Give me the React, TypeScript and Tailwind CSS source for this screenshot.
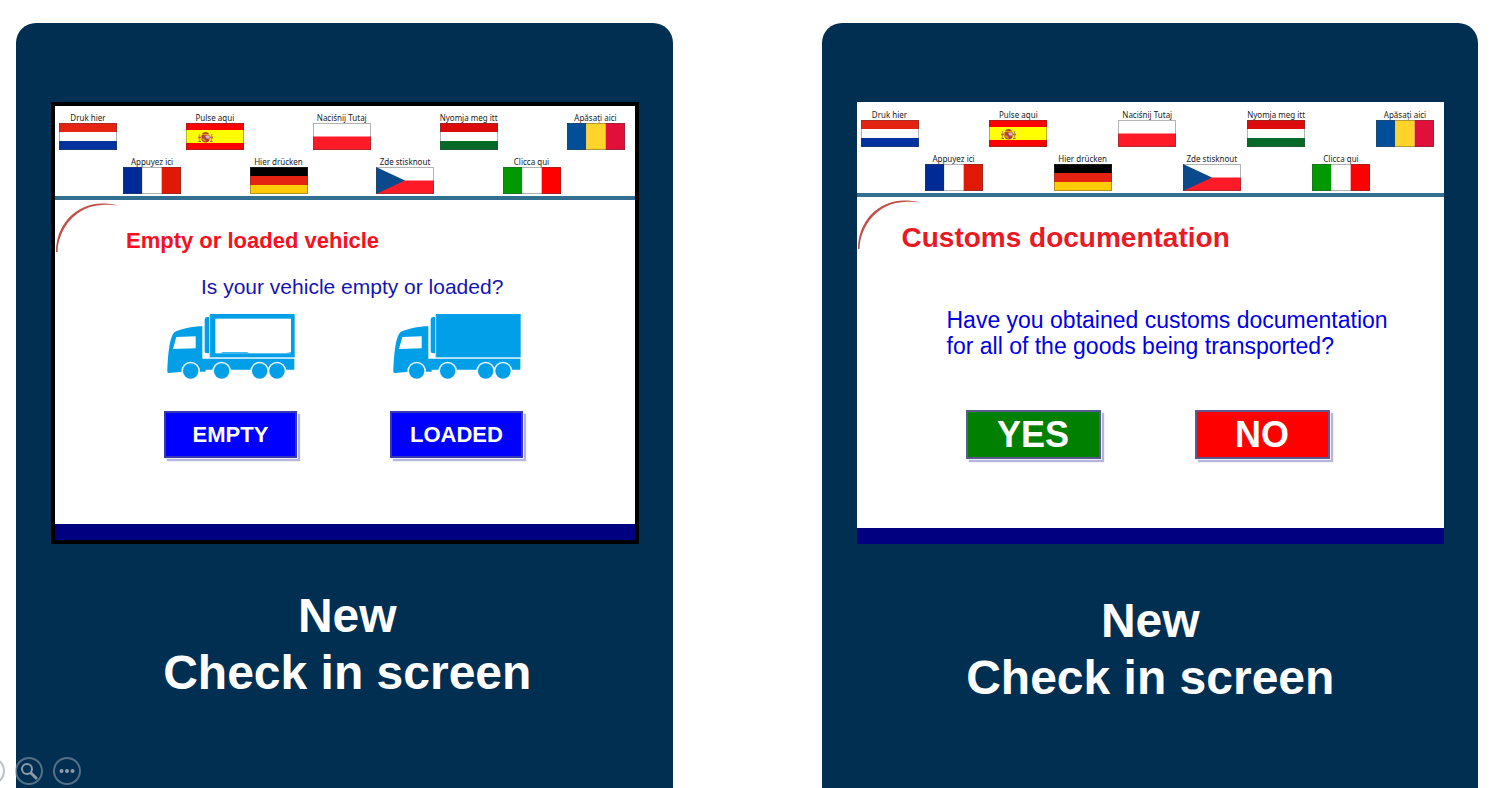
import type { ReactNode } from 'react';

type Country = 'nl' | 'es' | 'pl' | 'hu' | 'ro' | 'fr' | 'de' | 'cz' | 'it';

interface Language {
  country: Country;
  label: string;
}

const TOP_LANGUAGES: Language[] = [
  { country: 'nl', label: 'Druk hier' },
  { country: 'es', label: 'Pulse aqui' },
  { country: 'pl', label: 'Naciśnij Tutaj' },
  { country: 'hu', label: 'Nyomja meg itt' },
  { country: 'ro', label: 'Apăsați aici' },
];

const BOTTOM_LANGUAGES: Language[] = [
  { country: 'fr', label: 'Appuyez ici' },
  { country: 'de', label: 'Hier drücken' },
  { country: 'cz', label: 'Zde stisknout' },
  { country: 'it', label: 'Clicca qui' },
];

const HORIZONTAL: Partial<Record<Country, string[]>> = {
  nl: ['#e42313', '#ffffff', '#0032a0'],
  hu: ['#dc0c0c', '#ffffff', '#056a28'],
  de: ['#000000', '#e42313', '#ffcb05'],
  pl: ['#ffffff', '#ff1a28'],
};

const VERTICAL: Partial<Record<Country, string[]>> = {
  ro: ['#004f98', '#ffd42a', '#e0103a'],
  fr: ['#002a96', '#ffffff', '#e01808'],
  it: ['#009a00', '#ffffff', '#ff0000'],
};

function Flag({ country }: { country: Country }): ReactNode {
  const rows = HORIZONTAL[country];
  const columns = VERTICAL[country];

  return (
    <svg viewBox="0 0 58 27" className="block h-[27px] w-[58px]" aria-hidden="true">
      {rows?.map((color, i) => (
        <rect
          key={i}
          y={(27 / rows.length) * i}
          width="58"
          height={27 / rows.length}
          fill={color}
        />
      ))}
      {columns?.map((color, i) => (
        <rect
          key={i}
          x={(58 / columns.length) * i}
          width={58 / columns.length}
          height="27"
          fill={color}
        />
      ))}
      {country === 'es' && (
        <>
          <rect width="58" height="27" fill="#ff0000" />
          <rect y="7" width="58" height="13" fill="#ffff00" />
          <path d="M13.500 11v8M25.500 11v8" stroke="#c8a060" strokeWidth="1.500" />
          <path d="M12 14.500h3M24 14.500h3" stroke="#c86040" strokeWidth="1.500" />
          <path d="M12.500 18.500h2.500M24 18.500h2.500" stroke="#907060" />
          <path d="M15.500 12h8v4.500c0 4-8 4-8 0z" fill="#b8403c" />
          <path d="M16 11.500c0-3.500 7-3.500 7 0z" fill="#c04a20" />
          <path d="M19.500 12.500h3.500v3h-3.500z" fill="#e2b6c4" />
          <path d="M16 15.500h3.500v3c-2 0-3.500-1-3.500-3z" fill="#d88a28" />
          <circle cx="19.500" cy="15.500" r="1" fill="#6a4a80" />
        </>
      )}
      {country === 'cz' && (
        <>
          <rect width="58" height="13.500" fill="#ffffff" />
          <rect y="13.500" width="58" height="13.500" fill="#ff1a28" />
          <path d="M0 0l29 13.500L0 27z" fill="#0a4a8c" />
        </>
      )}
      <rect x="0.5" y="0.5" width="57" height="26" fill="none" stroke="#404040" strokeOpacity="0.4" />
    </svg>
  );
}

function LanguageButton({ country, label }: Language): ReactNode {
  return (
    <button type="button" className="flex w-[58px] flex-col items-center">
      <span className="font-['Noto_Sans',sans-serif] text-[8px] leading-[11px] whitespace-nowrap text-[#222]">
        {label}
      </span>
      <Flag country={country} />
    </button>
  );
}

function LanguageBar(): ReactNode {
  return (
    <nav aria-label="Language" className="flex flex-col gap-[6px] border-b-4 border-[#33708f] pt-[6px] pb-[2px]">
      <div className="flex justify-between pr-[10px] pl-[4px]">
        {TOP_LANGUAGES.map((language) => (
          <LanguageButton key={language.country} {...language} />
        ))}
      </div>
      <div className="flex justify-between pr-[74px] pl-[68px]">
        {BOTTOM_LANGUAGES.map((language) => (
          <LanguageButton key={language.country} {...language} />
        ))}
      </div>
    </nav>
  );
}

function CornerArc(): ReactNode {
  return (
    <svg
      viewBox="0 0 66 50"
      className="absolute top-[3px] left-0 h-[50px] w-[66px]"
      aria-hidden="true"
    >
      <path d="M1 49C1 22 20 1 47 0.500C53 0.500 58 1 63 2.500C58 1.800 53 1.500 47 2C22 3 3.500 24 2.500 49z" fill="#c05048" />
    </svg>
  );
}

function Truck({ loaded = false }: { loaded?: boolean }): ReactNode {
  return (
    <svg viewBox="44 130 384 201" className="h-[67px] w-[128px]" aria-hidden="true">
      <g fill="#009fe8">
        <path d="M45 306C46 270 50 204 66 188C82 178 122 170 150 170V267H426V300H160V306H92L50 310Q45 310 45 306Z" />
        <path d="M171 142H164Q157 143 157 150V244Q157 251 164 251H171Z" />
        <rect x="173" y="133" width="254" height="130" />
      </g>
      <path d="M172 136V264H426" fill="none" stroke="#a8dcf5" strokeWidth="3" />
      <path d="M72 202L130 200V236L62 238Z" fill="#fff" />
      {!loaded && (
        <>
          <rect x="189" y="147" width="227" height="104" fill="#fff" />
          <path d="M202 251L212 248H285L290 251M398 251L416 248V251Z" fill="#009fe8" />
        </>
      )}
      {[115, 208, 322, 374].map((cx) => (
        <circle key={cx} cx={cx} cy="304" r="28" fill="#e4f5fd" />
      ))}
      {/* keeps the wheel arches open below the chassis */}
      <rect x="44" y="311" width="384" height="20" fill="#fff" />
      {[115, 208, 322, 374].map((cx) => (
        <circle key={cx} cx={cx} cy="304" r="23" fill="#009fe8" />
      ))}
    </svg>
  );
}

const CHOICE_COLORS = {
  blue: 'h-[47px] w-[133px] border-[#3838b0] bg-[#0000ff] text-[22px]',
  green: 'h-[49px] w-[135px] border-[#5a5a90] bg-[#008000] text-[36px]',
  red: 'h-[49px] w-[135px] border-[#5a5a90] bg-[#ff0000] text-[36px]',
};

function ChoiceButton({
  color,
  children,
}: {
  color: keyof typeof CHOICE_COLORS;
  children: ReactNode;
}): ReactNode {
  return (
    <button
      type="button"
      className={`border-2 leading-none font-bold text-white shadow-[1px_1px_0_#f0f0fa,3px_3px_1px_#b4b4dc] ${CHOICE_COLORS[color]}`}
    >
      {children}
    </button>
  );
}

function VehicleScreen(): ReactNode {
  return (
    <div className="border-4 border-black bg-white">
      <LanguageBar />
      <div className="relative pt-[27px] pb-[66px]">
        <CornerArc />
        <h2 className="pl-[71px] text-[22px] leading-[28px] font-bold text-[#fa0f1e]">
          Empty or loaded vehicle
        </h2>
        <p className="mt-[18px] pl-[146px] text-[21px] leading-[28px] text-[#1414b4]">
          Is your vehicle empty or loaded?
        </p>
        <div className="mt-[12px] flex gap-[93px] pl-[109px]">
          <div className="flex flex-col items-center gap-[31px]">
            <Truck />
            <ChoiceButton color="blue">EMPTY</ChoiceButton>
          </div>
          <div className="flex flex-col items-center gap-[31px]">
            <Truck loaded />
            <ChoiceButton color="blue">LOADED</ChoiceButton>
          </div>
        </div>
      </div>
      <div className="h-[16px] bg-[#000080]" />
    </div>
  );
}

function CustomsScreen(): ReactNode {
  return (
    <div className="bg-white pt-[1px]">
      <LanguageBar />
      <div className="relative pt-[27px] pb-[69px]">
        <CornerArc />
        <h2 className="pl-[45px] text-[28px] leading-[28px] font-bold text-[#eb1923]">
          Customs documentation
        </h2>
        <p className="mt-[55px] pl-[90px] text-[23px] leading-[26px] text-[#0000e6]">
          Have you obtained customs documentation
          <br />
          for all of the goods being transported?
        </p>
        <div className="mt-[51px] flex gap-[94px] pl-[109px]">
          <ChoiceButton color="green">YES</ChoiceButton>
          <ChoiceButton color="red">NO</ChoiceButton>
        </div>
      </div>
      <div className="h-[16px] bg-[#000080]" />
    </div>
  );
}

function Panel({ children }: { children: ReactNode }): ReactNode {
  return (
    <section className="flex-1 rounded-t-[20px] bg-[#002f52] pt-[79px] pr-[34px] pl-[35px]">
      {children}
    </section>
  );
}

function Caption(): ReactNode {
  return (
    <h1 className="text-center text-[48px] leading-[57px] font-bold text-white">
      New
      <br />
      Check in screen
    </h1>
  );
}

// Slide show controls, the first one runs off the left edge
function SlideControls(): ReactNode {
  const ring =
    'flex size-[28px] items-center justify-center rounded-full border-2 border-[#8c9baa]/60 text-[#8c9baa]';

  return (
    <div className="absolute bottom-[3px] left-[-23px] flex gap-[10px]">
      <button type="button" aria-label="Previous" className={ring} />
      <button type="button" aria-label="Zoom" className={ring}>
        <svg viewBox="0 0 18 18" className="size-[18px]" fill="none" stroke="currentColor" aria-hidden="true">
          <circle cx="7" cy="7" r="5" strokeWidth="2" />
          <path d="M11 11l5 5" strokeWidth="3" strokeLinecap="round" />
        </svg>
      </button>
      <button type="button" aria-label="More" className={ring}>
        <svg viewBox="0 0 18 18" className="size-[18px]" fill="currentColor" aria-hidden="true">
          <circle cx="3.500" cy="9" r="2" />
          <circle cx="9" cy="9" r="2" />
          <circle cx="14.500" cy="9" r="2" />
        </svg>
      </button>
    </div>
  );
}

export default function App(): ReactNode {
  return (
    <main className="relative flex min-h-screen gap-[149px] overflow-hidden bg-white pt-[23px] pr-[23px] pl-[16px] font-['Liberation_Sans',Arial,sans-serif]">
      <Panel>
        <VehicleScreen />
        <div className="pt-[43px] pl-[5px]">
          <Caption />
        </div>
      </Panel>
      <Panel>
        <CustomsScreen />
        <div className="pt-[48px]">
          <Caption />
        </div>
      </Panel>
      <SlideControls />
    </main>
  );
}
